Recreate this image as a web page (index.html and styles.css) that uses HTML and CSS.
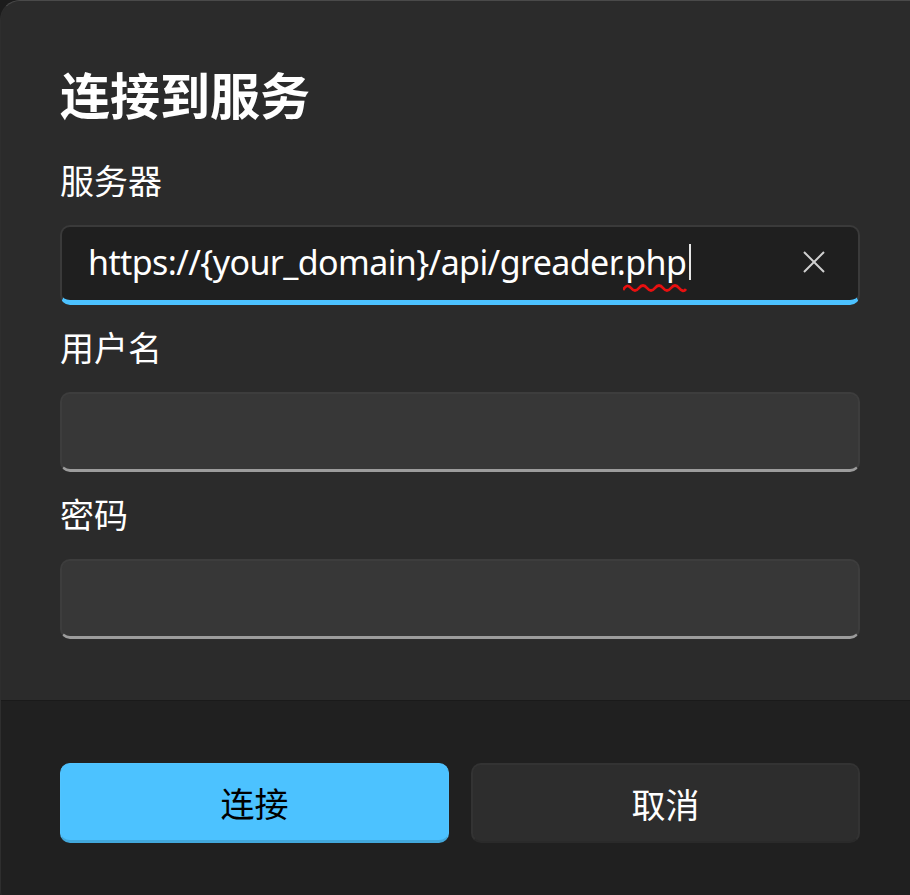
FILE: index.html
```html
<!DOCTYPE html>
<html lang="zh-CN">
<head>
<meta charset="utf-8">
<title>连接到服务</title>
<link rel="stylesheet" href="styles.css">
</head>
<body>
<div class="dialog">
  <div class="content">
    <h1 class="title">连接到服务</h1>
    <div class="field">
      <label class="label">服务器</label>
      <div class="input focused">
        <span class="value">https://{your_domain}/api/greader.<span class="misspelled">php<svg class="squiggle" width="64" height="12" viewBox="0 0 64 12"><path d="M0 8 Q4 1 8 6 T16 6 T24 6 T32 6 T40 6 T48 6 T56 6 T63 7" stroke="#e81010" stroke-width="2.8" fill="none"/></svg></span></span><span class="caret"></span>
        <span class="clear">
          <svg width="24" height="24" viewBox="0 0 24 24"><path d="M2 2 L22 22 M22 2 L2 22" stroke="#d0d0d0" stroke-width="2" fill="none"/></svg>
        </span>
      </div>
    </div>
    <div class="field">
      <label class="label">用户名</label>
      <div class="input"></div>
    </div>
    <div class="field">
      <label class="label">密码</label>
      <div class="input"></div>
    </div>
  </div>
  <div class="footer">
    <button class="btn primary">连接</button>
    <button class="btn secondary">取消</button>
  </div>
</div>
</body>
</html>
```

FILE: styles.css
```css
* { box-sizing: border-box; }
html, body {
  margin: 0;
  padding: 0;
  width: 910px;
  height: 895px;
  overflow: hidden;
  background: #1c1c1c;
}
body {
  font-family: "Noto Sans", "Noto Sans CJK SC", sans-serif;
  color: #ffffff;
}
.dialog {
  width: 930px;
  height: 910px;
  border-radius: 20px 0 0 20px;
  border-top: 1px solid #4a4a4a;
  border-left: 1px solid #2e2e2e;
  overflow: hidden;
  background: #2b2b2b;
  display: flex;
  flex-direction: column;
}
.content {
  padding: 57px 70px 0 59px;
  height: 699px;
}
.title {
  margin: 0 0 27px 0;
  font-family: "Noto Sans CJK SC", sans-serif;
  font-weight: 700;
  font-size: 50px;
  line-height: 70px;
  height: 70px;
}
.field {
  display: flex;
  flex-direction: column;
  margin-bottom: 17px;
}
.label {
  font-family: "Noto Sans CJK SC", sans-serif;
  font-size: 34px;
  line-height: 50px;
  height: 50px;
  margin-bottom: 20px;
}
.input {
  height: 80px;
  width: 800px;
  border-radius: 10px;
  background: #373737;
  border: 2px solid #3d3d3d;
  border-bottom: 3px solid #9c9c9c;
  display: flex;
  align-items: center;
  padding: 0 26px;
}
.input.focused {
  background: #1f1f1f;
  border: 2px solid #3a3a3a;
  border-bottom: 5px solid #4cc2ff;
  padding-bottom: 3px;
}
.value {
  font-family: "Noto Sans", sans-serif;
  font-size: 34px;
  letter-spacing: -0.6px;
  color: #ffffff;
  white-space: nowrap;
}
.misspelled {
  position: relative;
}
.squiggle {
  position: absolute;
  left: -2px;
  bottom: -9px;
}
.caret {
  display: inline-block;
  width: 2px;
  height: 36px;
  background: #e6e6e6;
  margin-left: 3px;
}
.clear {
  margin-left: auto;
  margin-right: 6px;
  display: flex;
  align-items: center;
}
.footer {
  flex: 1;
  background: #202020;
  border-top: 1px solid #1a1a1a;
  padding: 62px 70px 0 59px;
  display: flex;
  gap: 22px;
  align-items: flex-start;
}
.btn {
  width: 389px;
  height: 80px;
  border-radius: 10px;
  font-family: "Noto Sans CJK SC", sans-serif;
  font-size: 34px;
  display: flex;
  align-items: center;
  justify-content: center;
  padding: 0;
}
.btn.primary {
  background: #4cc2ff;
  color: #000000;
  border: 1px solid #52c4ff;
  border-bottom: 3px solid #42a8dc;
}
.btn.secondary {
  background: #2d2d2d;
  color: #ffffff;
  border: 2px solid #333333;
  border-bottom: 2px solid #2a2a2a;
}
```
